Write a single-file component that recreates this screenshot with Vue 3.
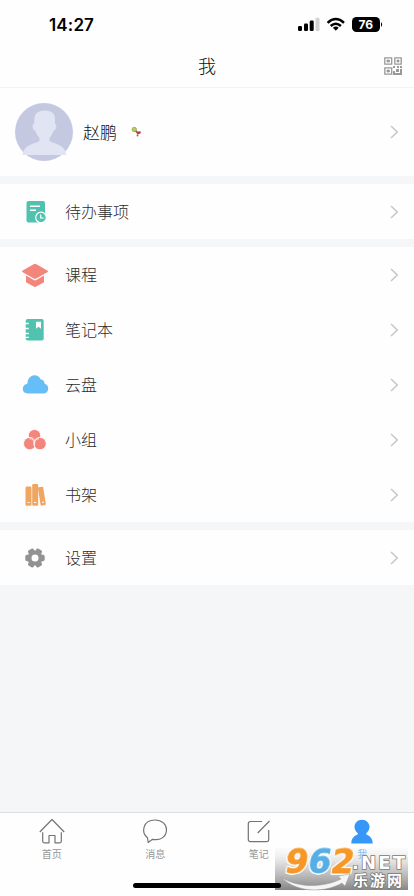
<script setup>
const groups = [
  [{ label: '待办事项', icon: 'todo' }],
  [
    { label: '课程', icon: 'course' },
    { label: '笔记本', icon: 'notebook' },
    { label: '云盘', icon: 'cloud' },
    { label: '小组', icon: 'group' },
    { label: '书架', icon: 'books' },
  ],
  [{ label: '设置', icon: 'gear' }],
]
const tabs = [
  { label: '首页', icon: 'home' },
  { label: '消息', icon: 'chat' },
  { label: '笔记', icon: 'edit' },
  { label: '我', icon: 'me', active: true },
]
</script>

<template>
  <div class="screen">
    <header class="top">
      <div class="status">
        <span class="time">14:27</span>
        <svg class="signals" width="86" height="18" viewBox="0 0 86 18">
          <rect x="0" y="10" width="4" height="5" rx="1.2" />
          <rect x="6" y="7.5" width="4" height="7.5" rx="1.2" />
          <rect x="11.7" y="4.5" width="4" height="10.5" rx="1.2" />
          <rect x="17.5" y="1.8" width="4" height="13.2" rx="1.2" fill="#d2d2d2" />
          <g fill="none" stroke="#000" stroke-width="2.5">
            <path d="M29.6 6.8Q37.8 -0.8 46 6.8" />
            <path d="M32.7 10Q37.8 5.4 42.9 10" />
          </g>
          <path d="M34.9 11.7Q37.8 9.3 40.7 11.7L37.8 14.8Z" />
          <rect x="54" y="1" width="28" height="15" rx="4.5" />
          <path d="M83 6Q85.3 8.5 83 11Z" />
          <text x="67.8" y="13" text-anchor="middle" class="battery">76</text>
        </svg>
      </div>
      <div class="titlebar">
        <span class="title">我</span>
        <svg class="qr" width="18" height="18" viewBox="0 0 18 18" fill="none" stroke="#999" stroke-width="1.3">
          <path d="M.8.8h6.9v6.4H.8zM10.800.8h6.400v6.400h-6.400zM.8 10.800h6.900v6.400H.8z" />
          <path d="M3 3h2.400v2H3zM13 3h2v2h-2zM3 13h2.400v2H3z" fill="#999" stroke-width=".8" />
          <g fill="#999" stroke="none">
            <rect x="9" y="9" width="2" height="2" />
            <rect x="13" y="9" width="2" height="2" />
            <rect x="16" y="9" width="2" height="2" />
            <rect x="12" y="12" width="3" height="3" />
            <rect x="9" y="14" width="2" height="4" />
            <rect x="11" y="16" width="7" height="2" />
            <rect x="16" y="12" width="2" height="5" />
          </g>
        </svg>
      </div>
    </header>

    <section class="profile">
      <svg class="avatar" width="58" height="58" viewBox="0 0 58 58">
        <circle cx="29" cy="29" r="29" fill="#c4c9e1" />
        <path d="M19.500 14Q21 7.500 29.500 7.500Q39 7.500 40 14V21Q42 21 41 25Q40 28 38.500 28Q37 32.500 34.500 35V38C39 41 50 41 51.500 52H7.500C9 41 20 41 24.500 38V35Q21.500 32 20.500 28Q18.500 28 17.800 25Q17 21 19 21Z" fill="#e1e4f2" />
      </svg>
      <span class="name">赵鹏</span>
      <svg class="badge" width="11" height="12" viewBox="0 0 11 12">
        <circle cx="3.3" cy="3.5" r="2.3" fill="#b7c960" stroke="#849742" stroke-width=".6" />
        <path d="M4.700 5L7.500 7.500" stroke="#8a552d" stroke-width="1.5" />
        <path d="M5 5.500L9 6L8 7.800L6.500 9Z" fill="#c53d42" />
        <circle cx="8.5" cy="6.5" r="1.3" fill="#ae3f42" />
        <circle cx="6.5" cy="9.5" r="1" fill="#ce5455" />
      </svg>
      <svg class="chevron" width="9" height="14" viewBox="0 0 9 14"><path d="M1 1L7.300 7L1 13" /></svg>
    </section>

    <section v-for="(group, i) in groups" :key="i" class="group">
      <div v-for="item in group" :key="item.icon" class="row">
        <svg class="icon" width="28" height="28" viewBox="0 0 28 28">
          <template v-if="item.icon === 'todo'">
            <rect x="5.5" y="3" width="18.5" height="21.5" rx="2" fill="#50c2af" />
            <path d="M9 8.300h10M9 12.300h6" stroke="#fff" stroke-width="1.4" />
            <circle cx="20" cy="19.5" r="5.3" fill="#50c2af" stroke="#fff" stroke-width="1.2" />
            <path d="M19.700 16.500V20h3" fill="none" stroke="#fff" stroke-width="1.2" />
          </template>
          <template v-else-if="item.icon === 'course'">
            <path d="M1.300 9.800L12.600 3.200Q14 2.400 15.400 3.200L26.700 9.800Q27.300 10.400 26.700 10.900L15.300 17.400Q14 18.100 12.700 17.400L1.300 10.900Q.7 10.400 1.300 9.800Z" fill="#f4857a" />
            <path d="M5 14.600L12.700 19.100Q14 19.800 15.300 19.100L23 14.600V21.300L15.300 25.600Q14 26.300 12.700 25.600L5 21.300Z" fill="#f4857a" />
          </template>
          <template v-else-if="item.icon === 'notebook'">
            <rect x="4.7" y="3" width="18" height="21.5" rx="2" fill="#50c2af" />
            <path d="M4 7.500h3.800M4 12.500h3.800M4 17.500h3.800M4 21.300h3.800" stroke="#fff" stroke-width="1.3" />
            <path d="M15 5.700h5v7l-2.500-2L15 12.700z" fill="#fff" />
          </template>
          <path v-else-if="item.icon === 'cloud'" d="M7 22.500C3.800 22.500 1.800 20.600 1.800 17.800C1.800 14.900 4 13.200 6.300 13.100C6.500 7.800 9.500 4.300 13.300 4.300C16.300 4.300 18.400 5.800 19.500 8.200C22 8.500 23.200 10 23.700 12.700C26 13.200 27.200 15.200 27.200 17.500C27.200 20.300 25.300 22.500 22.500 22.500Z" fill="#66bef6" />
          <template v-else-if="item.icon === 'group'">
            <g fill="#f4857a" stroke="#fff" stroke-width=".8">
              <circle cx="13.5" cy="9.7" r="6.2" />
              <circle cx="8.7" cy="17.6" r="6.2" />
              <circle cx="19" cy="17.6" r="6.2" />
            </g>
            <path d="M8.500 12.800Q13.500 12 13.500 20M13.500 18Q14 12.500 18 12.800" fill="none" stroke="#fff" stroke-width=".8" />
          </template>
          <template v-else-if="item.icon === 'books'">
            <rect x="4.5" y="5.5" width="6" height="19.2" rx="1.2" fill="#efa662" />
            <rect x="11.2" y="3" width="6" height="21.7" rx="1.2" fill="#efa662" />
            <rect x="18.2" y="6" width="5.3" height="18.5" rx="1" transform="rotate(-9 20 15)" fill="#efa662" />
            <path d="M6.500 21.500h2M13 21.500h2.300M21 21.400l2-.4" stroke="#fff" stroke-width="1" />
          </template>
          <template v-else>
            <g fill="#929292">
              <circle cx="14" cy="14" r="7.6" />
              <rect v-for="a in 6" :key="a" x="10.8" y="4.3" width="6.4" height="6" rx="1.7" :transform="`rotate(${a * 60 - 30} 14 14)`" />
            </g>
            <circle cx="14" cy="14" r="3.5" fill="#fff" />
          </template>
        </svg>
        <span class="label">{{ item.label }}</span>
        <svg class="chevron" width="9" height="14" viewBox="0 0 9 14"><path d="M1 1L7.300 7L1 13" /></svg>
      </div>
    </section>

    <nav class="tabs">
      <div v-for="tab in tabs" :key="tab.icon" class="tab" :class="{ active: tab.active }">
        <svg width="28" height="28" viewBox="0 0 28 28" fill="none" stroke="#747474" stroke-width="1.2">
          <path v-if="tab.icon === 'home'" d="M1.800 15L14 2.500L26.200 15M4.700 15.300V24.300Q4.700 25.800 6.200 25.800H11V18.500H17V25.800H21.800Q23.300 25.800 23.300 24.300V15.300" stroke-linejoin="round" />
          <path v-else-if="tab.icon === 'chat'" d="M6.500 20.800C-.2 15.500 1.800 3 14 3C21 3 25.500 7.500 25.500 12.700C25.500 20 19 24 11.500 22.300L7.200 25.500Z" stroke-linejoin="round" />
          <path v-else-if="tab.icon === 'edit'" d="M17 4.500H5.500Q3.300 4.500 3.300 6.700V22.500Q3.300 24.700 5.500 24.700H21.500Q23.700 24.700 23.700 22.500V13M12.700 16L24.500 4" />
          <path v-else d="M14 2.700C18.500 2.700 21.500 6 21.500 10C21.500 13 19.700 14.800 18 16.500C17.600 18.300 24.700 18.300 24.700 26.600H3.300C3.300 18.300 10.400 18.300 10 16.500C8.300 14.800 6.500 13 6.500 10C6.500 6 9.500 2.700 14 2.700Z" fill="#3797f8" stroke="none" />
        </svg>
        <span>{{ tab.label }}</span>
      </div>
    </nav>
    <svg class="watermark" width="139" height="56" viewBox="0 -8 139 56">
      <defs>
        <linearGradient id="shade" x2="0" y2="1">
          <stop offset="0" stop-color="#eee" stop-opacity=".2" />
          <stop offset=".45" stop-color="#c3c3c3" stop-opacity=".75" />
          <stop offset="1" stop-color="#858585" />
        </linearGradient>
      </defs>
      <rect width="133" height="42" fill="url(#shade)" />
      <g class="digits" transform="translate(8.5 25) skewX(-10)">
        <text x="0" y="0" textLength="23" lengthAdjust="spacingAndGlyphs" fill="#f69727" stroke="#f69727">9</text>
        <text x="23" y="0" textLength="23" lengthAdjust="spacingAndGlyphs" fill="#56aee4" stroke="#56aee4">6</text>
        <text x="46" y="0" textLength="23" lengthAdjust="spacingAndGlyphs" fill="#f69727" stroke="#f69727">2</text>
      </g>
      <path d="M6 29C22 40 48 40 66 31L63 28L75 26L70 38L67 35C48 46 20 44 6 29Z" fill="#f5f5f5" stroke="#969696" stroke-width=".5" />
      <text class="net" x="77" y="20.5" textLength="53" lengthAdjust="spacing">.NET</text>
      <text class="brand" x="78" y="38" textLength="49" lengthAdjust="spacing">乐游网</text>
    </svg>
    <div class="home-indicator"></div>
  </div>
</template>

<style>
body { margin: 0; background: #f4f6f8; }
</style>
<style scoped>
.screen {
  position: relative;
  display: flex;
  flex-direction: column;
  width: 414px;
  height: 896px;
  overflow: hidden;
  background: #f4f6f8;
  color: #2c2c2c;
  font-family: "Liberation Sans", "Noto Sans CJK SC", sans-serif;
}
svg { display: block; flex: none; }
.top { height: 88px; box-sizing: border-box; border-bottom: 1px solid #f2f3f4; background: #fefefe; }
.status { display: flex; justify-content: space-between; height: 46px; padding: 15px 30px 0 49px; box-sizing: border-box; }
.time { font: 600 17px/20px Inter, sans-serif; color: #000; letter-spacing: .15px; }
.signals { margin-top: 1px; }
.battery { fill: #fff; font: 700 12px Inter, sans-serif; }
.titlebar { display: grid; grid-template-columns: 1fr auto 1fr; align-items: center; height: 40px; padding: 0 12px; }
.title { grid-column: 2; padding-bottom: 2px; font: 300 18px/24px "Noto Sans CJK SC", sans-serif; color: #111; }
.qr { justify-self: end; }
.profile { display: flex; align-items: center; height: 88px; padding: 0 15px; background: #fefefe; }
.name { margin-left: 10px; font: 300 17px/24px "Noto Sans CJK SC", sans-serif; color: #111; }
.badge { margin-left: 14px; }
.chevron { margin-left: auto; fill: none; stroke: #c6c6c6; stroke-width: 1.5; }
.group { margin-top: 8px; background: #fefefe; }
.row { display: flex; align-items: center; height: 55px; padding: 0 15px 0 21px; }
.label { margin-left: 16px; padding-bottom: 2px; font: 300 16px/24px "Noto Sans CJK SC", sans-serif; }
.tabs { display: grid; grid-template-columns: repeat(4, 1fr); height: 83px; margin-top: auto; border-top: 1px solid #dcdee1; background: #fefefe; }
.tab { display: flex; flex-direction: column; align-items: center; padding-top: 4px; font: 400 10px/15px "Noto Sans CJK SC", sans-serif; color: #969696; }
.tab span { margin-top: 1px; }
.active { color: #64a9ef; }
.home-indicator { position: absolute; left: 133px; top: 883px; width: 148px; height: 5px; border-radius: 3px; background: #000; }
.watermark { position: absolute; left: 275px; top: 840px; }
.digits { font: 700 33px "DejaVu Sans", sans-serif; stroke-width: .8px; filter: drop-shadow(1px 0 0 #fff) drop-shadow(-1px 0 0 #fff) drop-shadow(0 1px 0 #fff) drop-shadow(0 -1px 0 #fff); }
.net { font: 700 18px "DejaVu Sans", sans-serif; fill: #fff; stroke: #777; stroke-width: 1.5px; paint-order: stroke; }
.brand { font: 700 15px "Noto Sans CJK SC", sans-serif; fill: #fff; stroke: #777; stroke-width: 1.5px; paint-order: stroke; }
</style>
